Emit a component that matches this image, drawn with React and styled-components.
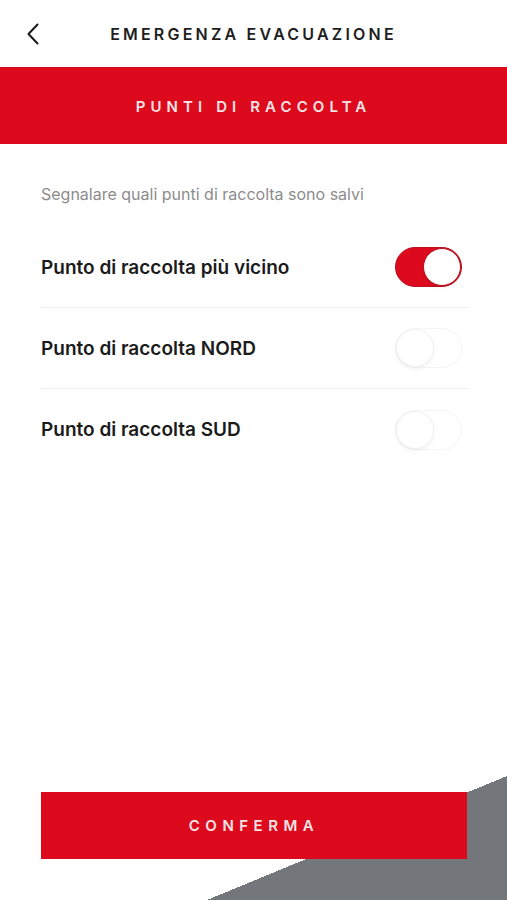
import React, { useState } from 'react';
import styled, { createGlobalStyle } from 'styled-components';

const RED = '#dd0a1e';
const FONT = '"Inter", "Open Sans", sans-serif';

const GlobalStyle = createGlobalStyle`
  html, body {
    margin: 0;
    padding: 0;
    background: #fff;
  }
  body {
    font-family: ${FONT};
    -webkit-font-smoothing: antialiased;
  }
  * { box-sizing: border-box; }
`;

const Screen = styled.div`
  display: flex;
  flex-direction: column;
  width: 507px;
  height: 900px;
  background: #fff;
  overflow: hidden;
`;

const TopBar = styled.header`
  display: grid;
  grid-template-columns: 60px 1fr 60px;
  align-items: center;
  height: 67px;
`;

const BackButton = styled.button`
  display: flex;
  align-items: center;
  justify-content: center;
  width: 60px;
  height: 67px;
  padding: 0 0 0 6px;
  border: 0;
  background: none;
  color: #1a1a1a;
  cursor: pointer;
`;

const Title = styled.h1`
  margin: 0;
  text-align: center;
  font-size: 16px;
  font-weight: 600;
  letter-spacing: 3.2px;
  color: #1e1e1e;
`;

const Band = styled.div`
  display: flex;
  align-items: center;
  justify-content: center;
  height: 77px;
  background: ${RED};
  border-top: 1px solid #c9081a;
`;

const BandTitle = styled.h2`
  margin: 0;
  font-size: 15px;
  font-weight: 600;
  letter-spacing: 5.1px;
  color: #f7e4e6;
`;

const Content = styled.main`
  flex: 1;
  padding: 41px 39px 0 41px;
`;

const Hint = styled.p`
  margin: 0 0 23px;
  font-size: 16px;
  line-height: 19px;
  font-weight: 400;
  color: #8c8c8c;
`;

const List = styled.ul`
  margin: 0;
  padding: 0;
  list-style: none;
`;

const Row = styled.li`
  display: flex;
  align-items: center;
  justify-content: space-between;
  height: 81px;
  padding-right: 6px;
  border-bottom: ${p => (p.$last ? '0' : '1px solid #ececec')};
`;

const RowLabel = styled.span`
  font-size: 19px;
  font-weight: 600;
  color: #1b1b1b;
`;

const Track = styled.button`
  display: flex;
  align-items: center;
  justify-content: ${p => (p.$on ? 'flex-end' : 'flex-start')};
  width: 67px;
  height: 40px;
  padding: 0;
  border-radius: 20px;
  border: 1px solid ${p => (p.$on ? '#b8101f' : '#f5f5f5')};
  background: ${p => (p.$on ? RED : '#fff')};
  cursor: pointer;
`;

const Knob = styled.span`
  width: 38px;
  height: 38px;
  border-radius: 50%;
  background: #fff;
  border: 1px solid ${p => (p.$on ? '#b8101f' : '#f0f0f0')};
  box-shadow: 0 2px 4px rgba(0, 0, 0, 0.05);
`;

const Footer = styled.footer`
  padding: 16px 40px 41px 41px;
  background: linear-gradient(to bottom right, transparent 50%, #73777c 50%)
    no-repeat right bottom / 300px 124px;
`;

const ConfirmButton = styled.button`
  display: flex;
  align-items: center;
  justify-content: center;
  width: 100%;
  height: 67px;
  border: 0;
  background: ${RED};
  font-family: ${FONT};
  font-size: 15px;
  font-weight: 600;
  letter-spacing: 5.5px;
  color: #f7e4e6;
  cursor: pointer;
`;

const Chevron = () => (
  <svg width="14" height="22" viewBox="0 0 14 22" fill="none">
    <path d="M11.5 1.5 L2.5 11 L11.5 20.5" stroke="currentColor" strokeWidth="2" strokeLinecap="round" strokeLinejoin="round" />
  </svg>
);

const points = [
  { id: 'near', label: 'Punto di raccolta più vicino', on: true },
  { id: 'nord', label: 'Punto di raccolta NORD', on: false },
  { id: 'sud', label: 'Punto di raccolta SUD', on: false },
];

export default function App() {
  const [state, setState] = useState(() =>
    Object.fromEntries(points.map(p => [p.id, p.on]))
  );

  return (
    <Screen>
      <GlobalStyle />
      <TopBar>
        <BackButton aria-label="Indietro">
          <Chevron />
        </BackButton>
        <Title>EMERGENZA EVACUAZIONE</Title>
        <span />
      </TopBar>
      <Band>
        <BandTitle>PUNTI DI RACCOLTA</BandTitle>
      </Band>
      <Content>
        <Hint>Segnalare quali punti di raccolta sono salvi</Hint>
        <List>
          {points.map((p, i) => (
            <Row key={p.id} $last={i === points.length - 1}>
              <RowLabel>{p.label}</RowLabel>
              <Track
                $on={state[p.id]}
                onClick={() => setState(s => ({ ...s, [p.id]: !s[p.id] }))}
              >
                <Knob $on={state[p.id]} />
              </Track>
            </Row>
          ))}
        </List>
      </Content>
      <Footer>
        <ConfirmButton>CONFERMA</ConfirmButton>
      </Footer>
    </Screen>
  );
}
